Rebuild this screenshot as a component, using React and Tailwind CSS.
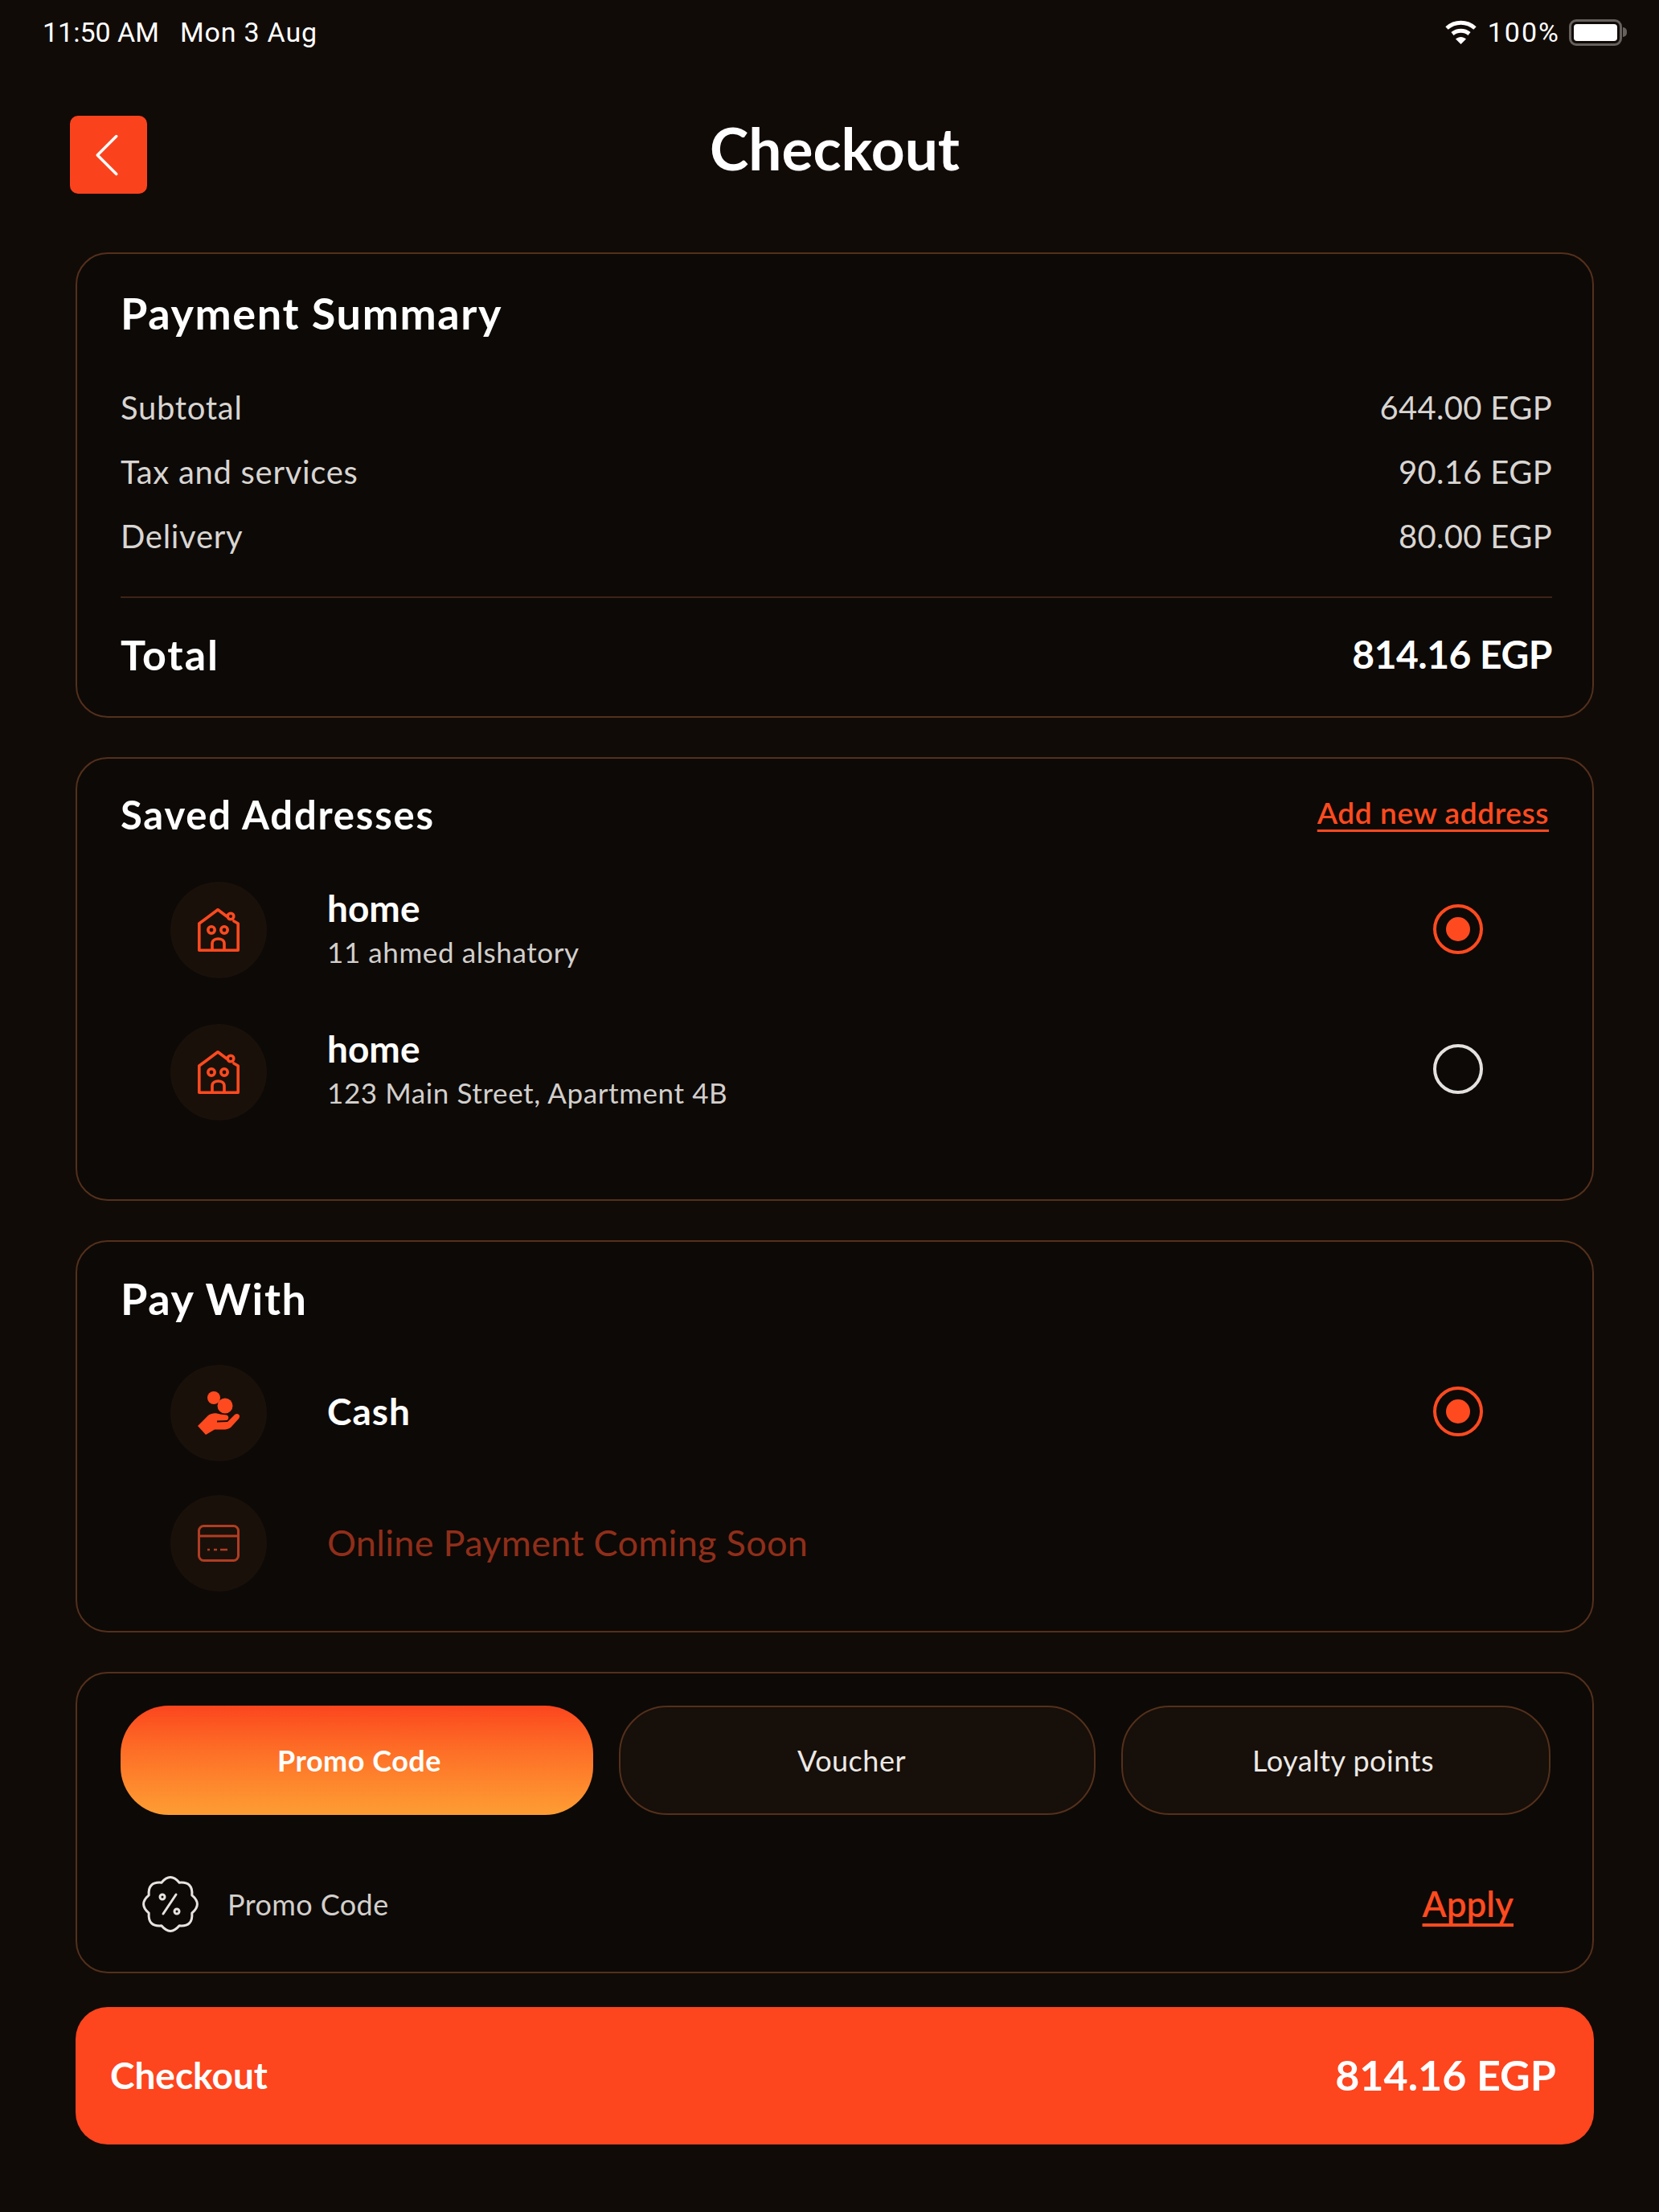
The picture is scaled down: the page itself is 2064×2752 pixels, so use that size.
import { ChevronLeft } from "lucide-react";

const FONT = "font-['Lato','Noto_Sans',sans-serif]";

function WifiIcon() {
  return (
    <svg width="41" height="32" viewBox="0 0 41 32" fill="none" stroke="white" strokeWidth="5">
      <path d="M3 11C13 2 28 2 38 11" />
      <path d="M10 18C16 13 25 13 31 18" />
      <path d="M20.5 31L14 24.5C18 21 23 21 27 24.5Z" fill="white" stroke="none" />
    </svg>
  );
}

function HouseIcon() {
  return (
    <svg width="52" height="54" viewBox="0 0 52 54" fill="none" stroke="#ff4a1f" strokeWidth="3.6" strokeLinejoin="round" strokeLinecap="round">
      <path d="M1.8 19L25 1.8L36 10M45 16L50.2 19V52.2H1.8V19" />
      <circle cx="41" cy="10" r="3.8" />
      <circle cx="17" cy="27" r="4.2" />
      <circle cx="33" cy="27" r="4.2" />
      <path d="M18 52.2V44C18 36 33 36 33 44V52.2" />
    </svg>
  );
}

function CashIcon() {
  return (
    <svg width="52" height="54" viewBox="0 0 52 54" fill="#ff4a1f">
      <circle cx="20" cy="8" r="8" />
      <circle cx="34" cy="18" r="9.5" />
      <path d="M0 43L13 30C18 26 24 27 28 28.5L36 29.5C39 30 39 35.5 36 36L24 36.5V38.5L37 38L46 29C50 26 54 30 51 34L41 45C38 47 35 47.5 32 47.5H21L10 54Z" />
    </svg>
  );
}

function CardIcon() {
  return (
    <svg width="52" height="46" viewBox="0 0 52 46" fill="none" stroke="#b03d22" strokeWidth="3">
      <rect x="1.5" y="1.5" width="49" height="43" rx="6" />
      <path d="M1.5 14H50.5" />
      <path d="M12 31H15M20 31H24M28 31H37" strokeWidth="2.4" />
    </svg>
  );
}

function badgePath() {
  const cx = 35;
  const cy = 36;
  let d = "";
  for (let i = 0; i < 8; i++) {
    const a0 = ((i - 0.5) * Math.PI) / 4 - Math.PI / 2;
    const a1 = (i * Math.PI) / 4 - Math.PI / 2;
    const a2 = ((i + 0.5) * Math.PI) / 4 - Math.PI / 2;
    if (i === 0) d += `M${cx + 29 * Math.cos(a0)} ${cy + 29 * Math.sin(a0)}`;
    d += `Q${cx + 40 * Math.cos(a1)} ${cy + 40 * Math.sin(a1)} ${cx + 29 * Math.cos(a2)} ${cy + 29 * Math.sin(a2)}`;
  }
  return d + "Z";
}

function PromoIcon() {
  return (
    <svg width="70" height="72" viewBox="0 0 70 72" fill="none" stroke="#e6e3e0" strokeWidth="3" strokeLinejoin="round" strokeLinecap="round">
      <path d={badgePath()} />
      <path d="M42 24L26 48" />
      <circle cx="25" cy="27" r="3" />
      <circle cx="43" cy="45" r="3" />
    </svg>
  );
}

function Radio({ checked, className }) {
  if (checked) {
    return (
      <div className={`flex h-[62px] w-[62px] items-center justify-center rounded-full border-[4px] border-[#ff4a1f] ${className}`}>
        <div className="h-[30px] w-[30px] rounded-full bg-[#ff4a1f]" />
      </div>
    );
  }
  return <div className={`h-[62px] w-[62px] rounded-full border-[4px] border-[#e4e2e0] ${className}`} />;
}

function IconCircle({ children }) {
  return (
    <div className="flex h-[120px] w-[120px] shrink-0 items-center justify-center rounded-full bg-[#1a100a]">
      {children}
    </div>
  );
}

function SummaryRow({ label, value }) {
  return (
    <div className="flex h-[80px] items-center justify-between text-[40px] text-[#d8d5d2]">
      <span className="tracking-[0.7px]">{label}</span>
      <span className="tracking-[0.3px]">{value}</span>
    </div>
  );
}

function AddressRow({ name, address, checked, radioClass, textClass }) {
  return (
    <div className="flex h-[120px] items-center pl-[62px] pr-[82px]">
      <IconCircle>
        <HouseIcon />
      </IconCircle>
      <div className={`ml-[75px] flex-1 ${textClass}`}>
        <div className="text-[46px] font-bold leading-[54px] text-white">{name}</div>
        <div className="mt-[5px] text-[35px] leading-[44px] tracking-[0.6px] text-[#d2cfcc]">{address}</div>
      </div>
      <Radio checked={checked} className={radioClass} />
    </div>
  );
}

export default function App() {
  return (
    <div className={`${FONT} h-[2752px] w-[2064px] overflow-hidden bg-[#110b08] pl-[94px] pr-[81px]`}>
      {/* status bar */}
      <div className="-mx-[41px] flex h-[80px] items-center justify-between font-['Roboto',sans-serif] text-[34px] text-white">
        <div className="flex gap-[26px]">
          <span>11:50 AM</span>
          <span className="tracking-[0.8px]">Mon 3 Aug</span>
        </div>
        <div className="flex items-center">
          <WifiIcon />
          <span className="ml-[13px] tracking-[2px]">100%</span>
          <div className="ml-[11px] flex h-[33px] w-[66px] items-center rounded-[9px] border-[3px] border-[#66615d] p-[3px]">
            <div className="h-full w-full rounded-[4px] bg-white" />
          </div>
          <div className="ml-[1px] h-[12px] w-[5px] rounded-r-full bg-[#66615d]" />
        </div>
      </div>

      {/* header */}
      <div className="mt-[64px] grid h-[170px] grid-cols-[1fr_auto_1fr] items-start">
        <div className="-ml-[7px] flex h-[97px] w-[96px] items-center justify-center rounded-[10px] bg-[#fa431d]">
          <ChevronLeft size={94} strokeWidth={0.9} color="white" className="-ml-[5px]" />
        </div>
        <h1 className="-mt-[2px] text-[73px] font-bold leading-[84px] text-white">Checkout</h1>
      </div>

      {/* payment summary */}
      <section className="h-[579px] rounded-[40px] border-2 border-[#54301c] bg-[#0d0906] pl-[54px] pr-[50px] pt-[44px]">
        <h2 className="text-[54px] font-bold leading-[60px] tracking-[1.6px] text-white">Payment Summary</h2>
        <div className="mt-[47px]">
          <SummaryRow label="Subtotal" value="644.00 EGP" />
          <SummaryRow label="Tax and services" value="90.16 EGP" />
          <SummaryRow label="Delivery" value="80.00 EGP" />
        </div>
        <div className="mt-[35px] h-[2px] bg-[#3d2416]" />
        <div className="mt-[40px] flex h-[60px] items-center justify-between font-bold text-white">
          <span className="text-[52px] tracking-[2px]">Total</span>
          <span className="text-[48px] tracking-[-0.5px]">814.16 EGP</span>
        </div>
      </section>

      {/* addresses */}
      <section className="mt-[49px] h-[552px] rounded-[40px] border-2 border-[#54301c] bg-[#0d0906] pl-[54px] pr-[54px] pt-[40px]">
        <div className="flex h-[60px] items-center justify-between">
          <h2 className="text-[49px] font-bold tracking-[1.8px] text-white">Saved Addresses</h2>
          <a className="-mt-[7px] text-[37px] font-semibold leading-[44px] tracking-[0.6px] text-[#ff4a1f] underline underline-offset-[7px]">
            Add new address
          </a>
        </div>
        <div className="mt-[53px] flex flex-col gap-[57px]">
          <AddressRow name="home" address="11 ahmed alshatory" checked radioClass="-mt-[3px]" textClass="-mt-[5px]" />
          <AddressRow name="home" address="123 Main Street, Apartment 4B" radioClass="-mt-[8px]" textClass="-mt-[9px]" />
        </div>
      </section>

      {/* pay with */}
      <section className="mt-[49px] h-[488px] rounded-[40px] border-2 border-[#54301c] bg-[#0d0906] pl-[54px] pr-[54px] pt-[41px]">
        <h2 className="text-[54px] font-bold leading-[60px] tracking-[1.6px] text-white">Pay With</h2>
        <div className="mt-[52px] flex flex-col gap-[42px]">
          <div className="flex h-[120px] items-center pl-[62px] pr-[82px]">
            <IconCircle>
              <CashIcon />
            </IconCircle>
            <span className="-mt-[5px] ml-[75px] flex-1 text-[46px] font-bold tracking-[1px] text-white">Cash</span>
            <Radio checked className="-mt-[4px]" />
          </div>
          <div className="flex h-[120px] items-center pl-[62px]">
            <IconCircle>
              <CardIcon />
            </IconCircle>
            <span className="ml-[75px] text-[45px] tracking-[0.3px] text-[#8f2e1a]">Online Payment Coming Soon</span>
          </div>
        </div>
      </section>

      {/* discounts */}
      <section className="mt-[49px] h-[375px] rounded-[40px] border-2 border-[#54301c] bg-[#0d0906] pl-[54px] pr-[52px] pt-[40px]">
        <div className="flex h-[136px] justify-between text-[36px] tracking-[0.5px] text-[#ece9e6]">
          <div className="flex w-[588px] items-center justify-center rounded-[60px] bg-gradient-to-b from-[#fb441e] to-[#fd9d33] pl-[6px] font-bold text-white">
            Promo Code
          </div>
          <div className="flex w-[593px] items-center justify-center rounded-[60px] border-2 border-[#54301c] bg-[#170f09] pr-[14px]">
            Voucher
          </div>
          <div className="flex w-[534px] items-center justify-center rounded-[60px] border-2 border-[#54301c] bg-[#170f09] pl-[18px]">
            Loyalty points
          </div>
        </div>
        <div className="mt-[71px] flex h-[80px] items-center justify-between pl-[27px] pr-[46px]">
          <div className="flex items-center">
            <PromoIcon />
            <span className="ml-[36px] text-[36px] tracking-[0.4px] text-[#d2cfcc]">Promo Code</span>
          </div>
          <a className="-mt-[2px] text-[44px] font-semibold text-[#ff4a1f] underline underline-offset-[8px]">Apply</a>
        </div>
      </section>

      {/* checkout */}
      <button className="mt-[42px] flex h-[171px] w-full items-center justify-between rounded-[40px] bg-[#fd451e] pl-[43px] pr-[47px] font-bold text-white">
        <span className="-mt-[3px] text-[46px]">Checkout</span>
        <span className="-mt-[3px] text-[52px]">814.16 EGP</span>
      </button>
    </div>
  );
}
